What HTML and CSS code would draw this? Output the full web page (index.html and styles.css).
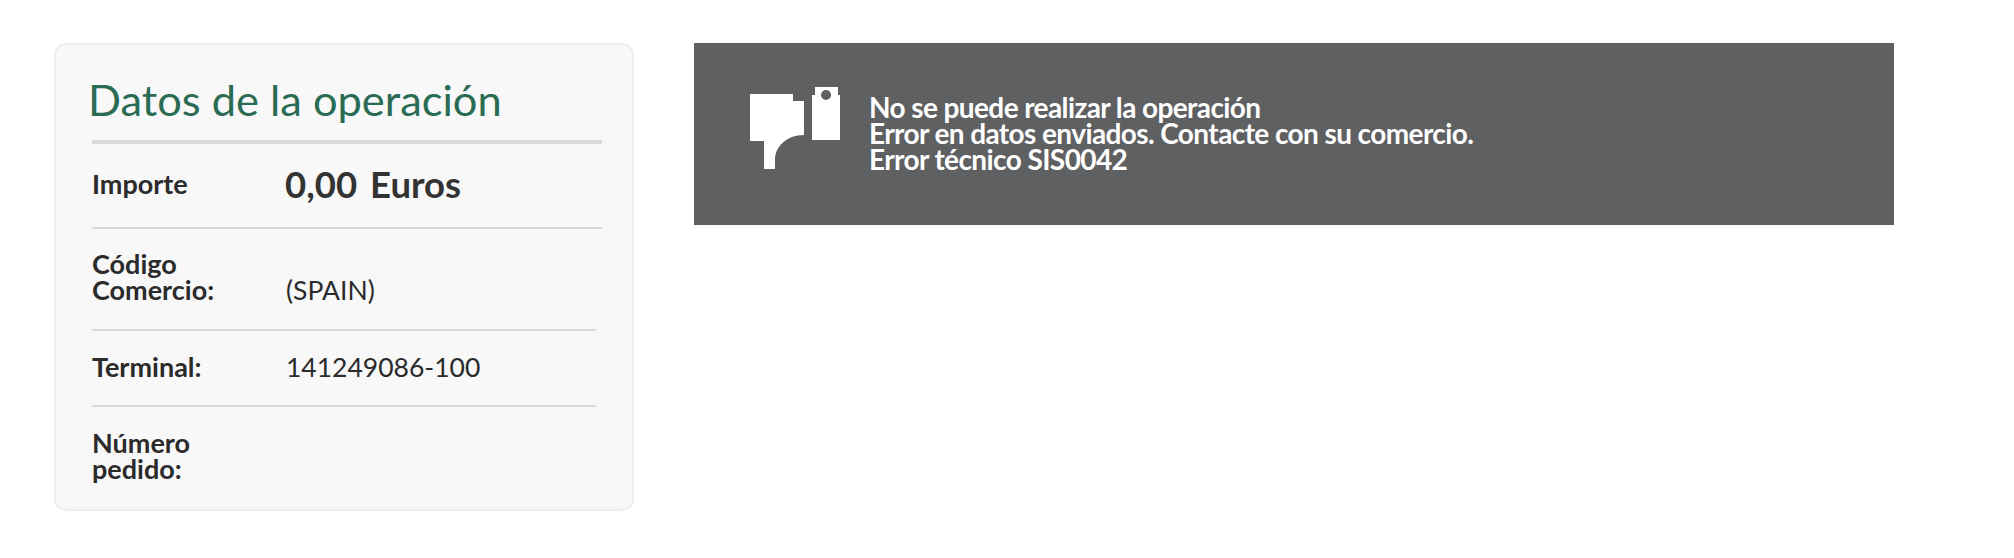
FILE: index.html
```html
<!DOCTYPE html>
<html lang="en">
<head>
  <meta charset="utf-8">
  <title>Datos de la operación</title>
  <link rel="stylesheet" href="styles.css">
</head>
<body>
  <div class="page">
    <section class="card">
      <h2 class="card-title">Datos de la operación</h2>
      <div class="row row-first">
        <span class="label">Importe</span>
        <span class="amount"><span>0,00</span><span>Euros</span></span>
      </div>
      <div class="row row-tall">
        <span class="label">Código Comercio:</span>
        <span class="value">(SPAIN)</span>
      </div>
      <div class="row row-short">
        <span class="label">Terminal:</span>
        <span class="value">141249086-100</span>
      </div>
      <div class="row row-last">
        <span class="label">Número pedido:</span>
      </div>
    </section>
    <section class="error">
      <svg class="error-icon" width="90" height="82" viewBox="0 0 90 82">
        <path fill="#fff" d="M0 7H43V14H54V48C36 48 25 60 25 73V82H14V54H0Z"/>
        <path fill="#fff" fill-rule="evenodd" d="M65 0H88V8H90V53H62V8H65ZM76 3A5 5 0 1 0 76.010 13A5 5 0 1 0 76 3Z"/>
      </svg>
      <p class="error-text">No se puede realizar la operación<br>Error en datos enviados. Contacte con su comercio.<br>Error técnico SIS0042</p>
    </section>
  </div>
</body>
</html>
```

FILE: styles.css
```css
body {
  margin: 0;
  background-color: #fff;
  font-family: Lato, "Open Sans", sans-serif;
  color: #2b2b2b;
}
.page {
  display: flex;
  align-items: flex-start;
  padding: 43px 0 0 54px;
}
.card {
  box-sizing: border-box;
  width: 580px;
  height: 468px;
  margin-right: 60px;
  padding: 28px 30px 0 36px;
  background-color: #f8f8f8;
  border: 2px solid #eee;
  border-radius: 12px;
}
.card-title {
  margin: 0 0 0 -4px;
  padding-bottom: 15px;
  font-size: 43.400px;
  line-height: 52px;
  font-weight: 400;
  color: #2a6b54;
}
.row {
  display: flex;
  border-bottom: 2px solid #d9d9d9;
  font-size: 26.500px;
  line-height: 26px;
}
.row-first {
  align-items: center;
  height: 89px;
  box-sizing: border-box;
  padding-bottom: 3px;
  border-top: 4px solid #d9d9d9;
}
.row-tall {
  align-items: flex-end;
  height: 102px;
  padding-bottom: 26px;
  box-sizing: border-box;
  margin-right: 6px;
}
.row-short {
  align-items: center;
  height: 76px;
  padding-bottom: 3px;
  box-sizing: border-box;
  margin-right: 6px;
}
.row-last {
  padding-top: 23px;
  border-bottom: none;
}
.label {
  width: 150px;
  margin-right: 44px;
  flex: none;
  font-size: 27px;
  font-weight: 700;
}
.value {
  font-weight: 400;
}
.amount {
  display: flex;
  gap: 13px;
  margin-left: -1px;
  font-size: 36.500px;
  font-weight: 700;
  color: #333;
}
.error {
  display: flex;
  align-items: center;
  width: 1200px;
  height: 182px;
  box-sizing: border-box;
  padding-left: 56px;
  background-color: #5f6062;
  color: #fff;
}
.error-icon {
  flex: none;
  margin: 0 29px 12px 0;
}
.error-text {
  margin: 0 0 2px;
  font-size: 28px;
  line-height: 26px;
  font-weight: 700;
  letter-spacing: -0.6px;
}
```
